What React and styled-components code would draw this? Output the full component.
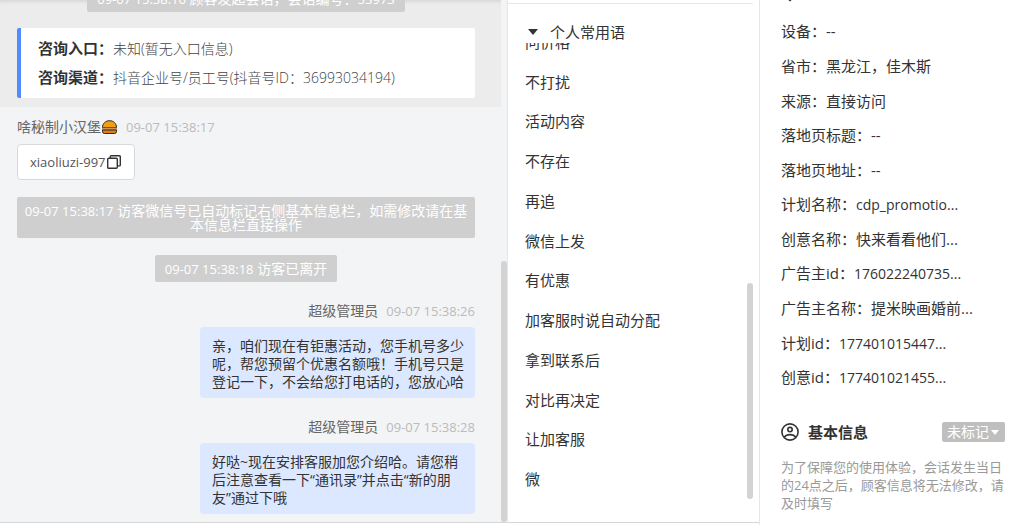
import React, { useState } from "react";
import styled, { createGlobalStyle } from "styled-components";

const phrases = [
  "问价格",
  "不打扰",
  "活动内容",
  "不存在",
  "再追",
  "微信上发",
  "有优惠",
  "加客服时说自动分配",
  "拿到联系后",
  "对比再决定",
  "让加客服",
  "微",
];

const visitInfo = [
  { label: "设备", value: "--" },
  { label: "省市", value: "黑龙江，佳木斯" },
  { label: "来源", value: "直接访问" },
  { label: "落地页标题", value: "--" },
  { label: "落地页地址", value: "--" },
  { label: "计划名称", value: "cdp_promotio...", latin: true },
  { label: "创意名称", value: "快来看看他们..." },
  { label: "广告主id", value: "176022240735...", latin: true },
  { label: "广告主名称", value: "提米映画婚前..." },
  { label: "计划id", value: "177401015447...", latin: true },
  { label: "创意id", value: "177401021455...", latin: true },
];

const replies = [
  {
    time: "09-07 15:38:26",
    text: "亲，咱们现在有钜惠活动，您手机号多少呢，帮您预留个优惠名额哦！手机号只是登记一下，不会给您打电话的，您放心哈",
  },
  {
    time: "09-07 15:38:28",
    text: "好哒~现在安排客服加您介绍哈。请您稍后注意查看一下“通讯录”并点击“新的朋友”通过下哦",
  },
];

const BurgerIcon = () => (
  <svg width="17" height="14" viewBox="0 0 17 14">
    <path
      d="M1.500 7.500C1.500 3.500 4.500 .7 8.500 .7s7 2.800 7 6.800z"
      fill="#f0a010"
      stroke="#2e2a24"
    />
    <rect x="1" y="7" width="15" height="1.500" fill="#8a4a20" />
    <rect x="1" y="8.500" width="15" height="1.500" fill="#d98a3a" />
    <path
      d="M1.500 10h14v1.500a2 2 0 0 1-2 2h-10a2 2 0 0 1-2-2z"
      fill="#d98212"
      stroke="#2e2a24"
    />
  </svg>
);

const CopyIcon = () => (
  <svg width="14" height="14" viewBox="0 0 14 14" fill="none" stroke="#333">
    <rect x="0.700" y="3.300" width="9.600" height="9.900" rx="1" strokeWidth="1.400" />
    <path d="M3.300 3.300V1.600a.9.9 0 0 1 .9-.9h8.200a.9.9 0 0 1 .9.9v8.400a.9.9 0 0 1-.9.9h-2" strokeWidth="1.400" />
  </svg>
);

const UserIcon = () => (
  <svg width="18" height="18" viewBox="0 0 18 18" fill="none" stroke="#333">
    <circle cx="9" cy="9" r="8.100" strokeWidth="1.600" />
    <circle cx="9" cy="6.600" r="2.200" strokeWidth="1.600" />
    <path d="M3.200 14.200C4.500 12.400 6.500 11.600 9 11.600s4.500.8 5.800 2.600" strokeWidth="1.600" />
  </svg>
);

const App = () => {
  const [open, setOpen] = useState(true);

  return (
    <>
      <GlobalStyle />
      <Page>
        <ChatPanel>
          <ChatBody>
            <ChatTop>
              <Notice>
                <Time $light>09-07 15:38:16</Time> 顾客发起会话，会话编号：
                <Time $light>53973</Time>
              </Notice>
              <EntryCard>
                <div>
                  <dt>咨询入口：</dt>
                  <dd>未知(暂无入口信息)</dd>
                </div>
                <div>
                  <dt>咨询渠道：</dt>
                  <dd>抖音企业号/员工号(抖音号ID：36993034194)</dd>
                </div>
              </EntryCard>
            </ChatTop>
            <Messages>
              <Visitor>
                <Sender>
                  <span className="name">
                    啥秘制小汉堡
                    <BurgerIcon />
                  </span>
                  <Time>09-07 15:38:17</Time>
                </Sender>
                <VisitorBubble>
                  xiaoliuzi-997
                  <button type="button" aria-label="复制">
                    <CopyIcon />
                  </button>
                </VisitorBubble>
              </Visitor>
              <Notice $wide>
                <Time $light>09-07 15:38:17</Time>{" "}
                访客微信号已自动标记右侧基本信息栏，如需修改请在基本信息栏直接操作
              </Notice>
              <Notice>
                <Time $light>09-07 15:38:18</Time> 访客已离开
              </Notice>
              {replies.map((reply) => (
                <Reply key={reply.time}>
                  <Sender>
                    <span className="name">超级管理员</span>
                    <Time>{reply.time}</Time>
                  </Sender>
                  <ReplyBubble>{reply.text}</ReplyBubble>
                </Reply>
              ))}
            </Messages>
          </ChatBody>
          <ChatScroll>
            <Thumb />
          </ChatScroll>
        </ChatPanel>

        <PhrasePanel>
          <PhraseTitle type="button" onClick={() => setOpen(!open)}>
            <Caret />
            个人常用语
          </PhraseTitle>
          <PhraseBody>
            <PhraseList>
              {open && phrases.map((phrase) => <li key={phrase}>{phrase}</li>)}
            </PhraseList>
            <PhraseScroll>
              <Thumb />
            </PhraseScroll>
          </PhraseBody>
        </PhrasePanel>

        <InfoPanel>
          <PinRow>
            <svg width="18" height="2" viewBox="0 0 18 2">
              <path d="M7.500 0h3L9.500 1.200h-1z" fill="#333" />
            </svg>
          </PinRow>
          <InfoList>
            {visitInfo.map((item) => (
              <InfoRow key={item.label} $latin={item.latin}>
                <dt>{item.label}：</dt>
                <dd>{item.value}</dd>
              </InfoRow>
            ))}
          </InfoList>
          <SectionHead>
            <UserIcon />
            <h2>基本信息</h2>
            <MarkButton type="button">
              未标记
              <Caret $small />
            </MarkButton>
          </SectionHead>
          <Tip>
            为了保障您的使用体验，会话发生当日的24点之后，顾客信息将无法修改，请及时填写
          </Tip>
        </InfoPanel>
      </Page>
    </>
  );
};

const GlobalStyle = createGlobalStyle`
  * {
    box-sizing: border-box;
  }
  body {
    margin: 0;
    background: #fff;
    color: #333;
    font-family: "Open Sans", "Noto Sans CJK SC", sans-serif;
    font-size: 14px;
  }
  dl, dd, ul, h2, p {
    margin: 0;
    padding: 0;
  }
  button {
    font: inherit;
    border: none;
    padding: 0;
    background: none;
    color: inherit;
    cursor: pointer;
  }
  svg {
    display: block;
    flex: none;
  }
`;

const Page = styled.div`
  display: grid;
  grid-template-columns: 508fr 252fr 262fr;
  grid-template-rows: 100%;
  height: 100vh;
  overflow: hidden;
`;

const ChatPanel = styled.section`
  display: flex;
  min-width: 0;
  margin-bottom: 2px;
  background: #f3f4f6;
  border-right: 1px solid #e6e6e6;
  border-bottom: 1px solid #d6d6d6;
`;

const ChatBody = styled.div`
  flex: 1;
  min-width: 0;
  overflow: hidden;
`;

const ChatScroll = styled.div`
  display: flex;
  flex-direction: column;
  justify-content: flex-end;
  width: 6px;
`;

const Thumb = styled.div`
  height: 50%;
  border-radius: 3px;
  background: #d3d3d3;
`;

const ChatTop = styled.div`
  display: flex;
  flex-direction: column;
  justify-content: flex-end;
  gap: 16px;
  height: 107px;
  padding: 0 26px 9px 17px;
  overflow: hidden;
  background: #ececec;
  box-shadow: inset 0 4px 4px -3px rgba(0, 0, 0, 0.12);
`;

const Notice = styled.div`
  flex: none;
  align-self: center;
  padding: ${(props) => (props.$wide ? "7px 6px 6px" : "7px 10px 6px")};
  border-radius: 2px;
  background: #cfcfcf;
  color: #fff;
  line-height: 14px;
  text-align: center;
`;

const Time = styled.time`
  color: ${(props) => (props.$light ? "#fff" : "#bbb")};
  font-size: 13px;
`;

const EntryCard = styled.dl`
  padding: 6px 17px;
  border-left: 4px solid #4e8cff;
  border-radius: 2px;
  background: #fff;
  font-size: 15px;
  line-height: 29px;
  div {
    display: flex;
  }
  dt {
    font-weight: bold;
  }
  dd {
    color: #444;
    font-size: 14px;
    font-weight: 300;
  }
`;

const Messages = styled.div`
  display: flex;
  flex-direction: column;
  gap: 17px;
  padding: 10px 26px 8px 17px;
`;

const Visitor = styled.div`
  display: flex;
  flex-direction: column;
  align-items: flex-start;
  gap: 7px;
`;

const Reply = styled.div`
  display: flex;
  flex-direction: column;
  align-items: flex-end;
  gap: 6px;
  padding-top: 2px;
`;

const Sender = styled.div`
  display: flex;
  align-items: center;
  gap: 8px;
  height: 20px;
  line-height: 20px;
  .name {
    display: flex;
    align-items: center;
    color: #666;
  }
`;

const VisitorBubble = styled.div`
  display: flex;
  align-items: center;
  height: 36px;
  padding: 0 13px 0 12px;
  border: 1px solid #d9d9d9;
  border-radius: 4px;
  background: #fff;
  color: #555;
  font-size: 13px;
  button {
    margin-left: 1px;
  }
`;

const ReplyBubble = styled.p`
  width: 275px;
  padding: 10px 11px 7px 12px;
  border-radius: 4px;
  background: #dce8ff;
  line-height: 18px;
`;

const PhrasePanel = styled.section`
  display: flex;
  flex-direction: column;
  min-width: 0;
  border-right: 1px solid #e6e6e6;
  padding-top: 3px;
  &::after {
    content: "";
    height: 1px;
    margin: auto 0 2px;
    background: #d6d6d6;
  }
`;

const PhraseTitle = styled.button`
  display: flex;
  align-items: center;
  flex: none;
  gap: 12px;
  height: 40px;
  margin-right: 6px;
  padding: 16px 0 0 20px;
  border-top: 1px solid #e8e8e8;
  font-size: 15px;
  line-height: 20px;
`;

const Caret = styled.span`
  border: solid transparent;
  border-width: ${(props) => (props.$small ? "5px 4px 0" : "6px 5px 0")};
  border-top-color: currentColor;
`;

const PhraseBody = styled.div`
  display: flex;
  flex: 1;
  min-height: 0;
  margin-bottom: 23px;
  overflow: hidden;
`;

/* anchored to its end, so the first phrase runs under the title */
const PhraseList = styled.ul`
  display: grid;
  flex: 1;
  align-self: flex-end;
  grid-auto-rows: 1fr;
  align-items: center;
  height: 477px;
  padding-left: 17px;
  list-style: none;
  font-size: 15px;
  line-height: 20px;
`;

const PhraseScroll = styled.div`
  display: flex;
  flex-direction: column;
  justify-content: flex-end;
  width: 12px;
  padding-right: 6px;
  ${Thumb} {
    height: 216px;
  }
`;

const InfoPanel = styled.section`
  min-width: 0;
  padding: 0 17px 0 21px;
`;

const PinRow = styled.div`
  height: 14px;
`;

const InfoList = styled.dl`
  display: grid;
  grid-auto-rows: 1fr;
  align-items: center;
  height: 381px;
`;

const InfoRow = styled.div`
  display: flex;
  align-items: baseline;
  font-size: 15px;
  line-height: 20px;
  white-space: nowrap;
  dd {
    font-size: ${(props) => (props.$latin ? "14px" : "15px")};
  }
`;

const SectionHead = styled.div`
  display: flex;
  align-items: center;
  height: 20px;
  margin-top: 27px;
  h2 {
    margin-left: 9px;
    font-size: 15px;
    line-height: 20px;
  }
`;

const MarkButton = styled.button`
  display: flex;
  align-items: center;
  gap: 2px;
  height: 20px;
  margin-left: auto;
  padding: 0 6px 0 5px;
  border-radius: 2px;
  background: #bfbfbf;
  color: #fff;
  line-height: 20px;
`;

const Tip = styled.p`
  margin: 16px -1px 0 0;
  color: #999;
  font-size: 13px;
  line-height: 18px;
`;

export default App;
